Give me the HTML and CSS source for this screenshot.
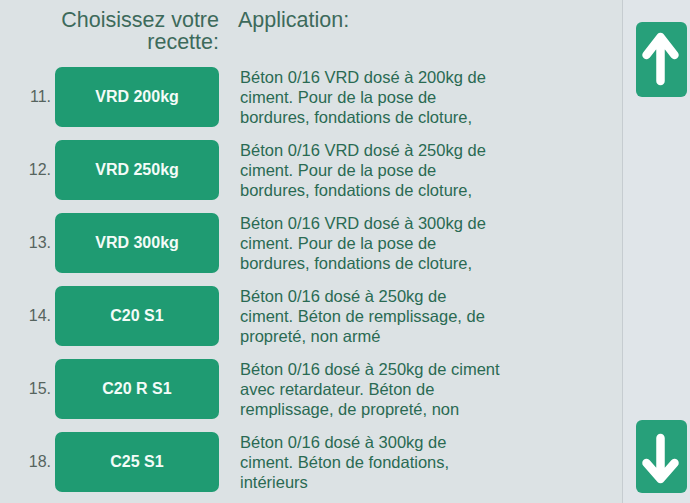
FILE: index.html
```html
<!DOCTYPE html>
<html lang="fr">
<head>
<meta charset="utf-8">
<title>Choisissez votre recette</title>
<link rel="stylesheet" href="styles.css">
</head>
<body>
<div class="screen">
  <main class="list">
    <div class="head">
      <div class="head-choose">Choisissez votre<br>recette:</div>
      <div class="head-app">Application:</div>
    </div>
    <div class="rows">
      <div class="row">
        <span class="num">11.</span>
        <button class="recipe">VRD 200kg</button>
        <p class="desc">Béton 0/16 VRD dosé à 200kg de<br>ciment. Pour de la pose de<br>bordures, fondations de cloture,</p>
      </div>
      <div class="row">
        <span class="num">12.</span>
        <button class="recipe">VRD 250kg</button>
        <p class="desc">Béton 0/16 VRD dosé à 250kg de<br>ciment. Pour de la pose de<br>bordures, fondations de cloture,</p>
      </div>
      <div class="row">
        <span class="num">13.</span>
        <button class="recipe">VRD 300kg</button>
        <p class="desc">Béton 0/16 VRD dosé à 300kg de<br>ciment. Pour de la pose de<br>bordures, fondations de cloture,</p>
      </div>
      <div class="row">
        <span class="num">14.</span>
        <button class="recipe">C20 S1</button>
        <p class="desc">Béton 0/16 dosé à 250kg de<br>ciment. Béton de remplissage, de<br>propreté, non armé</p>
      </div>
      <div class="row">
        <span class="num">15.</span>
        <button class="recipe">C20 R S1</button>
        <p class="desc">Béton 0/16 dosé à 250kg de ciment<br>avec retardateur. Béton de<br>remplissage, de propreté, non</p>
      </div>
      <div class="row">
        <span class="num">18.</span>
        <button class="recipe">C25 S1</button>
        <p class="desc">Béton 0/16 dosé à 300kg de<br>ciment. Béton de fondations,<br>intérieurs</p>
      </div>
    </div>
  </main>
  <aside class="nav">
    <button class="arrow arrow-up" aria-label="Monter">
      <svg viewBox="0 0 51 75" width="51" height="75"><path d="M24.5 59 V15 M10.5 33 L24.5 15 L38.5 33" fill="none" stroke="#fff" stroke-width="8.5" stroke-linecap="round" stroke-linejoin="round"/></svg>
    </button>
    <button class="arrow arrow-down" aria-label="Descendre">
      <svg viewBox="0 0 51 73" width="51" height="73"><path d="M24.5 18 V59 M10.5 43 L24.5 59 L38.5 43" fill="none" stroke="#fff" stroke-width="8.5" stroke-linecap="round" stroke-linejoin="round"/></svg>
    </button>
  </aside>
</div>
</body>
</html>
```
FILE: styles.css
```css
html, body {
  margin: 0;
  padding: 0;
}
body {
  width: 690px;
  height: 503px;
  overflow: hidden;
  background: #dce2e4;
  font-family: "Liberation Sans", Arial, sans-serif;
}
.screen {
  display: flex;
  height: 503px;
}
.list {
  width: 622px;
  border-right: 1px solid #c6ccd0;
  background: #dce2e4;
}
.head {
  display: grid;
  grid-template-columns: 219px 1fr;
  column-gap: 19px;
  padding-top: 9px;
  font-size: 21.5px;
  line-height: 22px;
  color: #3d6a5b;
}
.head-choose {
  text-align: right;
}
.rows {
  display: flex;
  flex-direction: column;
  gap: 13px;
  margin-top: 13px;
}
.row {
  display: grid;
  grid-template-columns: 51px 164px 1fr;
  column-gap: 4px;
  align-items: center;
  height: 60px;
}
.num {
  text-align: right;
  font-size: 16px;
  color: #56645e;
}
.recipe {
  height: 60px;
  border: 0;
  border-radius: 7px;
  background: #1f9b72;
  color: #f4fbf8;
  font-family: "Liberation Sans", Arial, sans-serif;
  font-weight: bold;
  font-size: 16px;
  padding: 0;
}
.desc {
  align-self: start;
  margin: 1px 0 0 17px;
  font-size: 16.5px;
  line-height: 20px;
  color: #2a6a53;
  white-space: nowrap;
}
.nav {
  flex: 1;
  background: #e0e5e9;
  display: flex;
  flex-direction: column;
  justify-content: space-between;
  padding: 22px 0 10px 13px;
}
.arrow {
  width: 51px;
  border: 0;
  padding: 0;
  border-radius: 6px;
  background: #27a07a;
  display: block;
}
.arrow svg {
  display: block;
}
.arrow-up {
  height: 75px;
}
.arrow-down {
  height: 73px;
}
```
